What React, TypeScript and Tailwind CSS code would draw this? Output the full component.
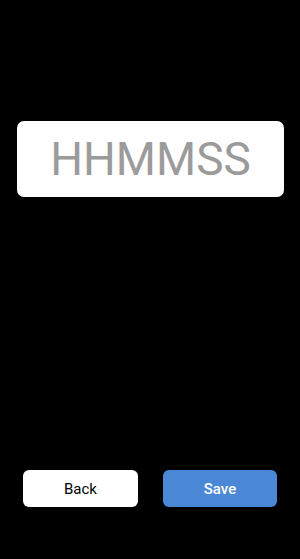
export default function App() {
  return (
    <div
      className="flex h-[559px] w-[300px] flex-col bg-black"
      style={{ fontFamily: "Roboto, 'Liberation Sans', sans-serif" }}
    >
      <div className="px-[17px] pt-[121px]">
        <div className="flex h-[76px] w-[267px] items-center justify-center rounded-[7px] bg-white">
          <span className="text-[46px] leading-none text-[#9b9b9b]">HHMMSS</span>
        </div>
      </div>
      <div className="mt-auto flex gap-[25px] px-[23px] pb-[52px]">
        <button className="h-[37px] w-[115px] rounded-[6px] bg-white pt-px text-[15px] text-black">
          Back
        </button>
        <button className="h-[37px] w-[114px] rounded-[6px] bg-[#4a87d5] pt-px text-[15px] font-medium text-white">
          Save
        </button>
      </div>
    </div>
  );
}
